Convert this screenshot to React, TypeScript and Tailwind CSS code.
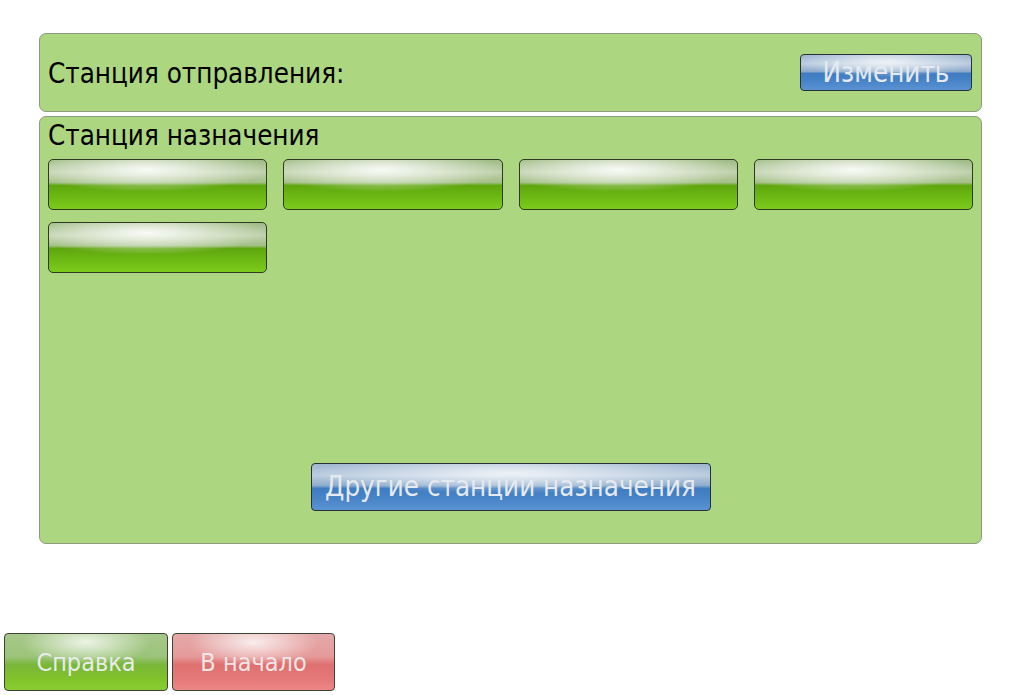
import React from 'react';

const font = "font-['DejaVu_Sans_Condensed','DejaVu_Sans',sans-serif]";

const greenGloss =
  'bg-[image:radial-gradient(ellipse_55%_45%_at_45%_20%,rgba(255,255,255,0.9),rgba(255,255,255,0)_100%),linear-gradient(to_bottom,#9fbb85_0%,#c0d2ad_25%,#a3bf86_46%,#5fa60e_52%,#6cb914_75%,#7ccb1c_100%)]';
const blueGloss =
  'bg-[image:radial-gradient(ellipse_50%_45%_at_50%_20%,rgba(255,255,255,0.75),rgba(255,255,255,0)_100%),linear-gradient(to_bottom,#9fb7d0_0%,#bccde0_25%,#8eabcc_47%,#3f7bc0_53%,#4884c8_75%,#5a93d4_100%)]';
const softGreen =
  'bg-[image:radial-gradient(ellipse_40%_40%_at_50%_15%,rgba(255,255,255,0.8),rgba(255,255,255,0)_100%),linear-gradient(to_bottom,#a6c78a_0%,#9cc47a_40%,#7ab63a_55%,#80c22a_80%,#8acd32_100%)]';
const softRed =
  'bg-[image:radial-gradient(ellipse_40%_40%_at_50%_15%,rgba(255,255,255,0.8),rgba(255,255,255,0)_100%),linear-gradient(to_bottom,#e4a9a9_0%,#e69a9a_40%,#df7070_55%,#e57878_80%,#ee8686_100%)]';

const StationButton = () => (
  <button className={`h-[51px] rounded-[5px] border border-[#2e3a22] ${greenGloss}`} />
);

export default function App() {
  const stations = [1, 2, 3, 4, 5];
  return (
    <div className={`w-[1021px] h-[695px] bg-white flex flex-col ${font}`}>
      <div className="flex flex-col gap-[4px] ml-[39px] mt-[33px] w-[943px]">
        <div className="h-[79px] rounded-[7px] border border-[#8c9a80] bg-[#acd67f] flex items-center justify-between pl-[8px] pr-[9px]">
          <span className="text-[27.5px] text-black leading-none mt-[2px]">Станция отправления:</span>
          <button className={`w-[172px] h-[37px] rounded-[4px] border border-[#28303a] text-[27.5px] leading-none text-[#e4eaf0] ${blueGloss}`}>
            Изменить
          </button>
        </div>

        <div className="h-[428px] rounded-[7px] border border-[#8c9a80] bg-[#acd67f] flex flex-col px-[8px] pt-[5px]">
          <span className="text-[27.5px] text-black leading-none h-[33px]">Станция назначения</span>
          <div className="grid grid-cols-4 gap-x-[16px] gap-y-[12px] w-[925px] mt-[4px]">
            {stations.map(s => (
              <StationButton key={s} />
            ))}
          </div>
          <div className="flex-1" />
          <div className="flex justify-center mb-[32px]">
            <button className={`w-[400px] h-[48px] rounded-[4px] border border-[#28303a] text-[27.5px] leading-none text-[#e4eaf0] ${blueGloss}`}>
              Другие станции назначения
            </button>
          </div>
        </div>
      </div>

      <div className="flex-1" />

      <div className="flex gap-[4px] ml-[4px] mb-[4px]">
        <button className={`w-[164px] h-[58px] rounded-[4px] border border-[#3c4436] text-[25px] leading-none text-[#e8ecea] ${softGreen}`}>
          Справка
        </button>
        <button className={`w-[163px] h-[58px] rounded-[4px] border border-[#3c4436] text-[25px] leading-none text-[#f0e6e6] ${softRed}`}>
          В начало
        </button>
      </div>
    </div>
  );
}
